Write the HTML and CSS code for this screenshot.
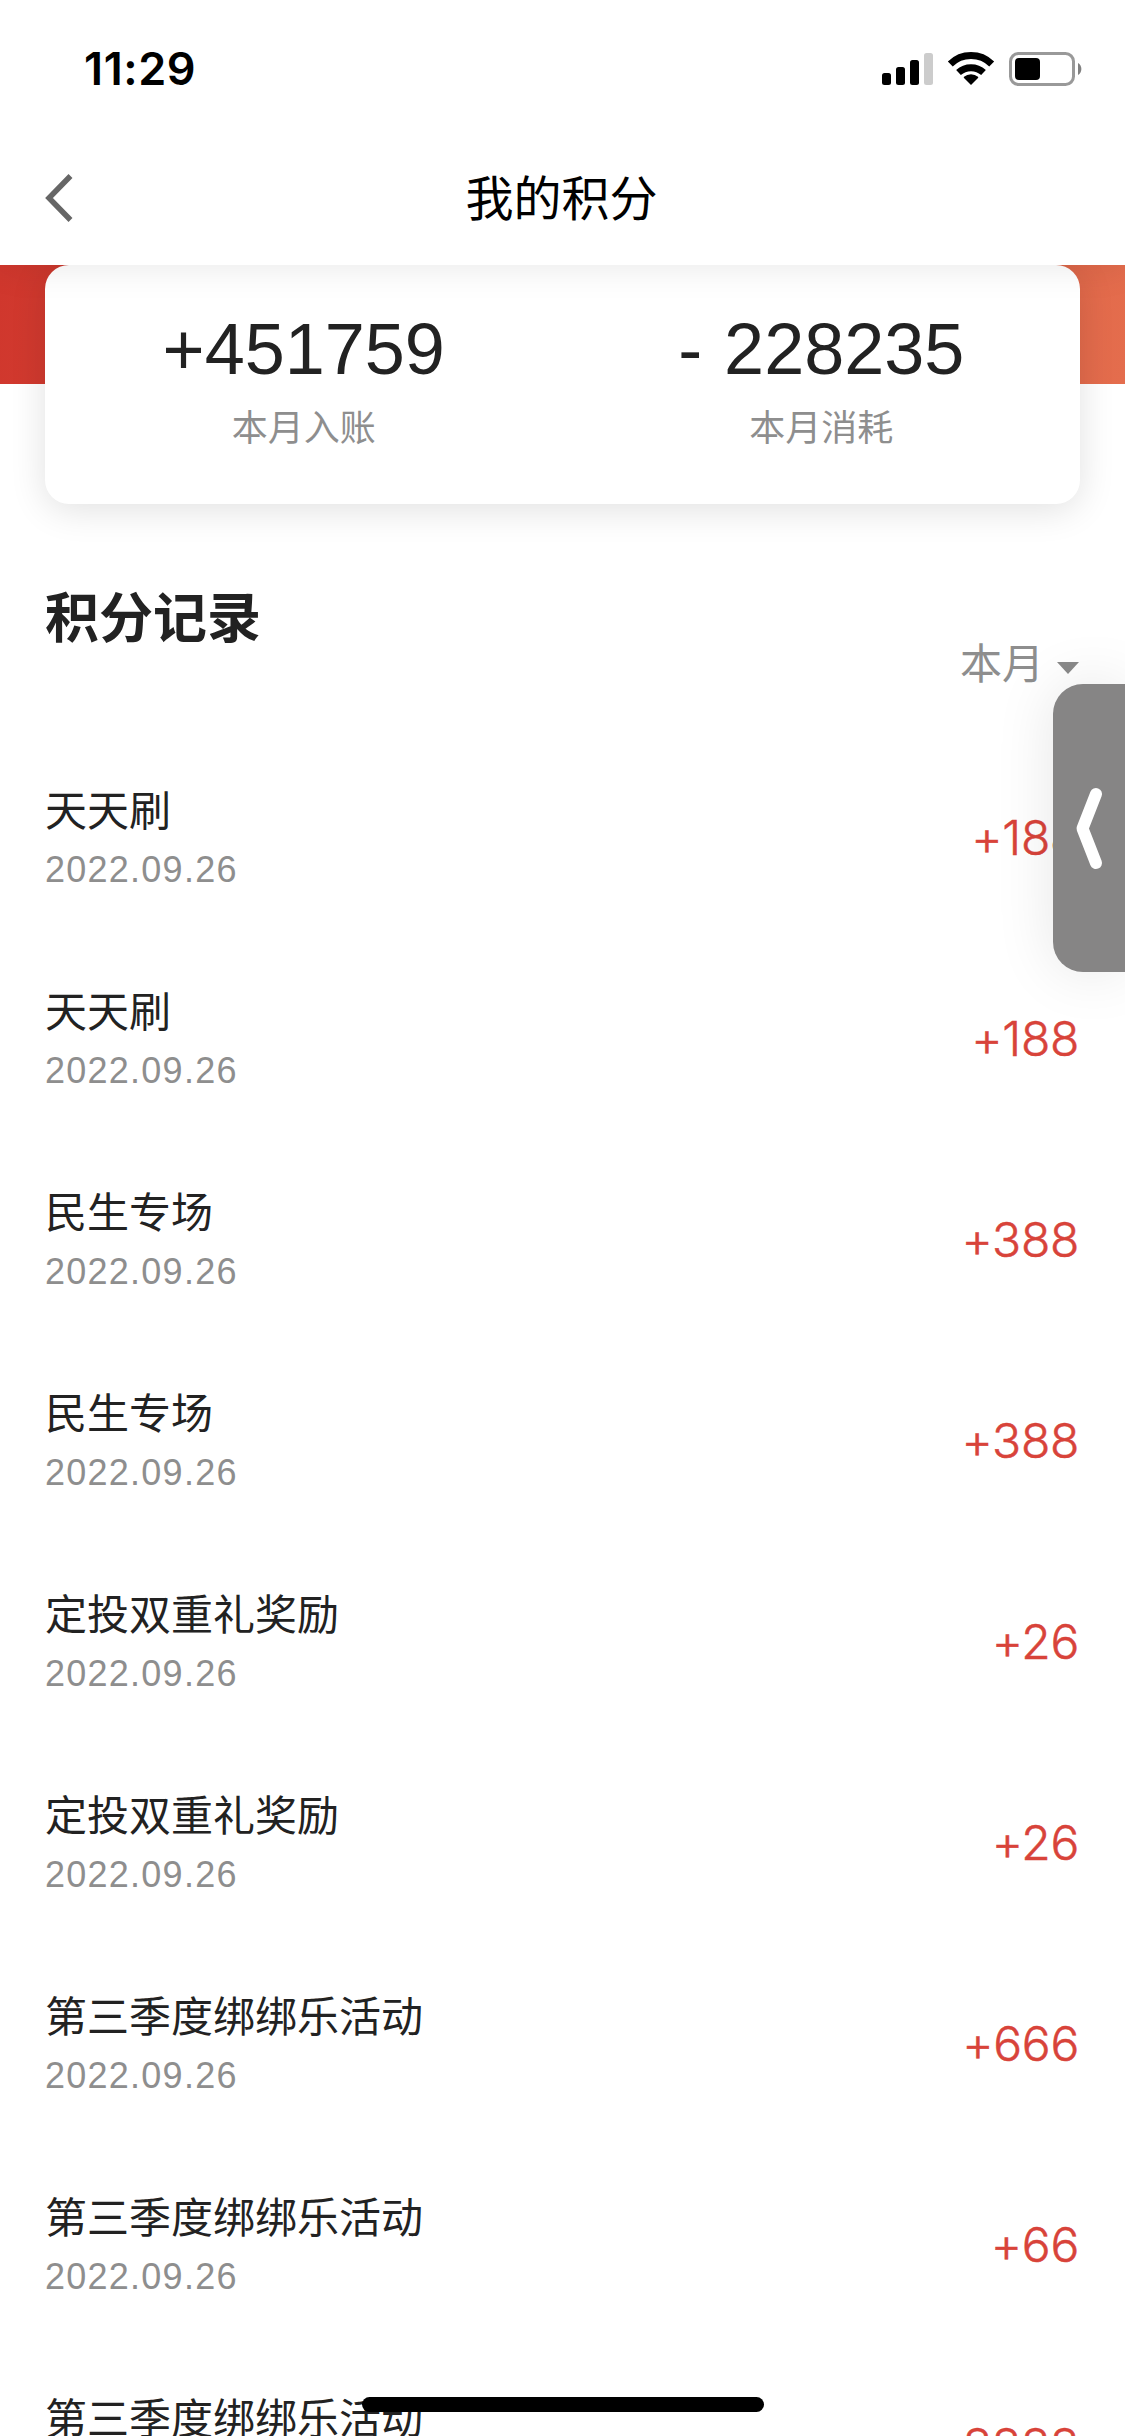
FILE: index.html
```html
<!DOCTYPE html>
<html lang="zh-CN">
<head>
<meta charset="utf-8">
<title>我的积分</title>
<link rel="stylesheet" href="styles.css">
</head>
<body>
<div class="screen">
  <header class="header">
    <div class="status">
      <span class="time">11:29</span>
      <svg class="status-icons" width="202" height="36" viewBox="881 51 202 36" aria-hidden="true">
        <rect x="882" y="73" width="9" height="12" rx="2.5"/>
        <rect x="896" y="67" width="9" height="18" rx="2.5"/>
        <rect x="910" y="60" width="9" height="25" rx="2.5"/>
        <rect x="924" y="53" width="9" height="32" rx="2.5" fill="#ccc"/>
        <g fill="none" stroke="#000">
          <path d="M950.3 64a29.500 29.500 0 0 1 41.400 0" stroke-width="7"/>
          <path d="M958.500 72.500a18.500 18.500 0 0 1 25 0" stroke-width="7"/>
        </g>
        <path d="M971 85l-7-7q-.6-.6 0-1.200a11 11 0 0 1 14 0q.6.6 0 1.200z"/>
        <rect x="1010.5" y="53.5" width="63" height="31" rx="8" fill="none" stroke="#999" stroke-width="3"/>
        <rect x="1015" y="58" width="25" height="22" rx="4"/>
        <path d="M1078 63a7 7 0 0 1 0 12z" fill="#808080"/>
      </svg>
    </div>
    <nav class="nav">
      <svg class="back" width="30" height="50" viewBox="0 0 30 50" aria-hidden="true">
        <path d="M25.5 3L4 25l21.500 22" fill="none" stroke="#666" stroke-width="5.500"/>
      </svg>
      <h1 class="nav-title">我的积分</h1>
    </nav>
  </header>

  <section class="summary">
    <div class="card">
      <div class="stat"><div class="stat-value">+451759</div><div class="stat-label">本月入账</div></div>
      <div class="stat"><div class="stat-value">- 228235</div><div class="stat-label">本月消耗</div></div>
    </div>
  </section>

  <div class="list-head">
    <h2 class="list-title">积分记录</h2>
    <div class="filter">本月<span class="caret"></span></div>
  </div>

  <ul class="list">
    <li class="row"><div><div class="name">天天刷</div><div class="date">2022.09.26</div></div><div class="amount">+188</div></li>
    <li class="row"><div><div class="name">天天刷</div><div class="date">2022.09.26</div></div><div class="amount">+188</div></li>
    <li class="row"><div><div class="name">民生专场</div><div class="date">2022.09.26</div></div><div class="amount">+388</div></li>
    <li class="row"><div><div class="name">民生专场</div><div class="date">2022.09.26</div></div><div class="amount">+388</div></li>
    <li class="row"><div><div class="name">定投双重礼奖励</div><div class="date">2022.09.26</div></div><div class="amount">+26</div></li>
    <li class="row"><div><div class="name">定投双重礼奖励</div><div class="date">2022.09.26</div></div><div class="amount">+26</div></li>
    <li class="row"><div><div class="name">第三季度绑绑乐活动</div><div class="date">2022.09.26</div></div><div class="amount">+666</div></li>
    <li class="row"><div><div class="name">第三季度绑绑乐活动</div><div class="date">2022.09.26</div></div><div class="amount">+66</div></li>
    <li class="row"><div><div class="name">第三季度绑绑乐活动</div><div class="date">2022.09.26</div></div><div class="amount">+8888</div></li>
  </ul>

  <div class="side-tab">
    <svg width="72" height="288" viewBox="0 0 72 288" aria-hidden="true">
      <path d="M43 110L29.500 144.500L43 179" fill="none" stroke="#fff" stroke-width="12" stroke-linecap="round" stroke-linejoin="round"/>
    </svg>
  </div>
  <div class="home-bar"></div>
</div>
</body>
</html>
```
FILE: styles.css
```css
* { box-sizing: border-box; }
body { margin: 0; background: #fff; }
h1, h2, ul { margin: 0; padding: 0; list-style: none; }
svg { display: block; }

.screen {
  position: relative;
  width: 1125px;
  height: 2436px;
  overflow: hidden;
  background: #fff;
  color: #222;
  font-family: "Liberation Sans", "Noto Sans CJK SC", sans-serif;
}

.header {
  position: relative;
  z-index: 1;
  height: 265px;
  background: #fff;
  box-shadow: 0 0 36px rgba(0, 0, 0, .1);
}
.status {
  display: flex;
  justify-content: space-between;
  align-items: center;
  height: 138px;
  padding: 0 42px 0 84px;
}
.time {
  color: #000;
  font: 600 45px/60px Inter, sans-serif;
  letter-spacing: .6px;
}
.nav {
  display: grid;
  grid-template-columns: 120px 1fr 120px;
  align-items: center;
  height: 120px;
}
.back { margin-left: 45px; }
.nav-title {
  padding: 3px 2px 0 0;
  color: #000;
  font-size: 48px;
  font-weight: 400;
  line-height: 70px;
  text-align: center;
}

.summary {
  height: 239px;
  padding: 0 45px;
  background: linear-gradient(100deg, #d0372d, #e46d4d) no-repeat 0 0 / 100% 119px;
}
.card {
  display: flex;
  height: 239px;
  padding-top: 44px;
  border-radius: 24px;
  background: #fff;
  box-shadow: 0 6px 36px rgba(0, 0, 0, .12);
}
.stat { flex: 1; text-align: center; }
.stat-value { font-size: 72px; line-height: 80px; word-spacing: 2px; }
.stat-label { margin-top: 13px; color: #8e8e8e; font-size: 36px; line-height: 54px; }

.list-head {
  display: flex;
  justify-content: space-between;
  height: 240px;
  padding: 75px 46px 0 45px;
}
.list-title { font-size: 54px; font-weight: 600; line-height: 80px; }
.filter {
  display: flex;
  align-items: center;
  height: 60px;
  margin-top: 51px;
  color: #8e8e8e;
  font-size: 42px;
}
.caret {
  margin: 16px 0 0 13px;
  border: 11px solid transparent;
  border-top: 12px solid #8a8a8a;
  border-bottom: 0;
}

.list { padding: 0 46px 0 45px; }
.row {
  display: flex;
  justify-content: space-between;
  height: 201px;
  padding-top: 38px;
}
.name { font-size: 42px; line-height: 60px; }
.date {
  margin-top: 4px;
  color: #8e8e8e;
  font-size: 36px;
  line-height: 48px;
  letter-spacing: 1.25px;
}
.amount {
  margin-top: 26px;
  color: #d8433a;
  font: 300 48px/60px Inter, sans-serif;
  font-feature-settings: "calt" 0;
  letter-spacing: -.3px;
  -webkit-text-stroke: .5px #d8433a;
}

.side-tab {
  position: absolute;
  z-index: 2;
  top: 684px;
  right: 0;
  width: 72px;
  height: 288px;
  border-radius: 30px 0 0 30px;
  background: #868585;
  box-shadow: 0 0 60px rgba(0, 0, 0, .1);
}
.home-bar {
  position: absolute;
  z-index: 2;
  left: 362px;
  bottom: 24px;
  width: 402px;
  height: 15px;
  border-radius: 8px;
  background: #000;
}
```
